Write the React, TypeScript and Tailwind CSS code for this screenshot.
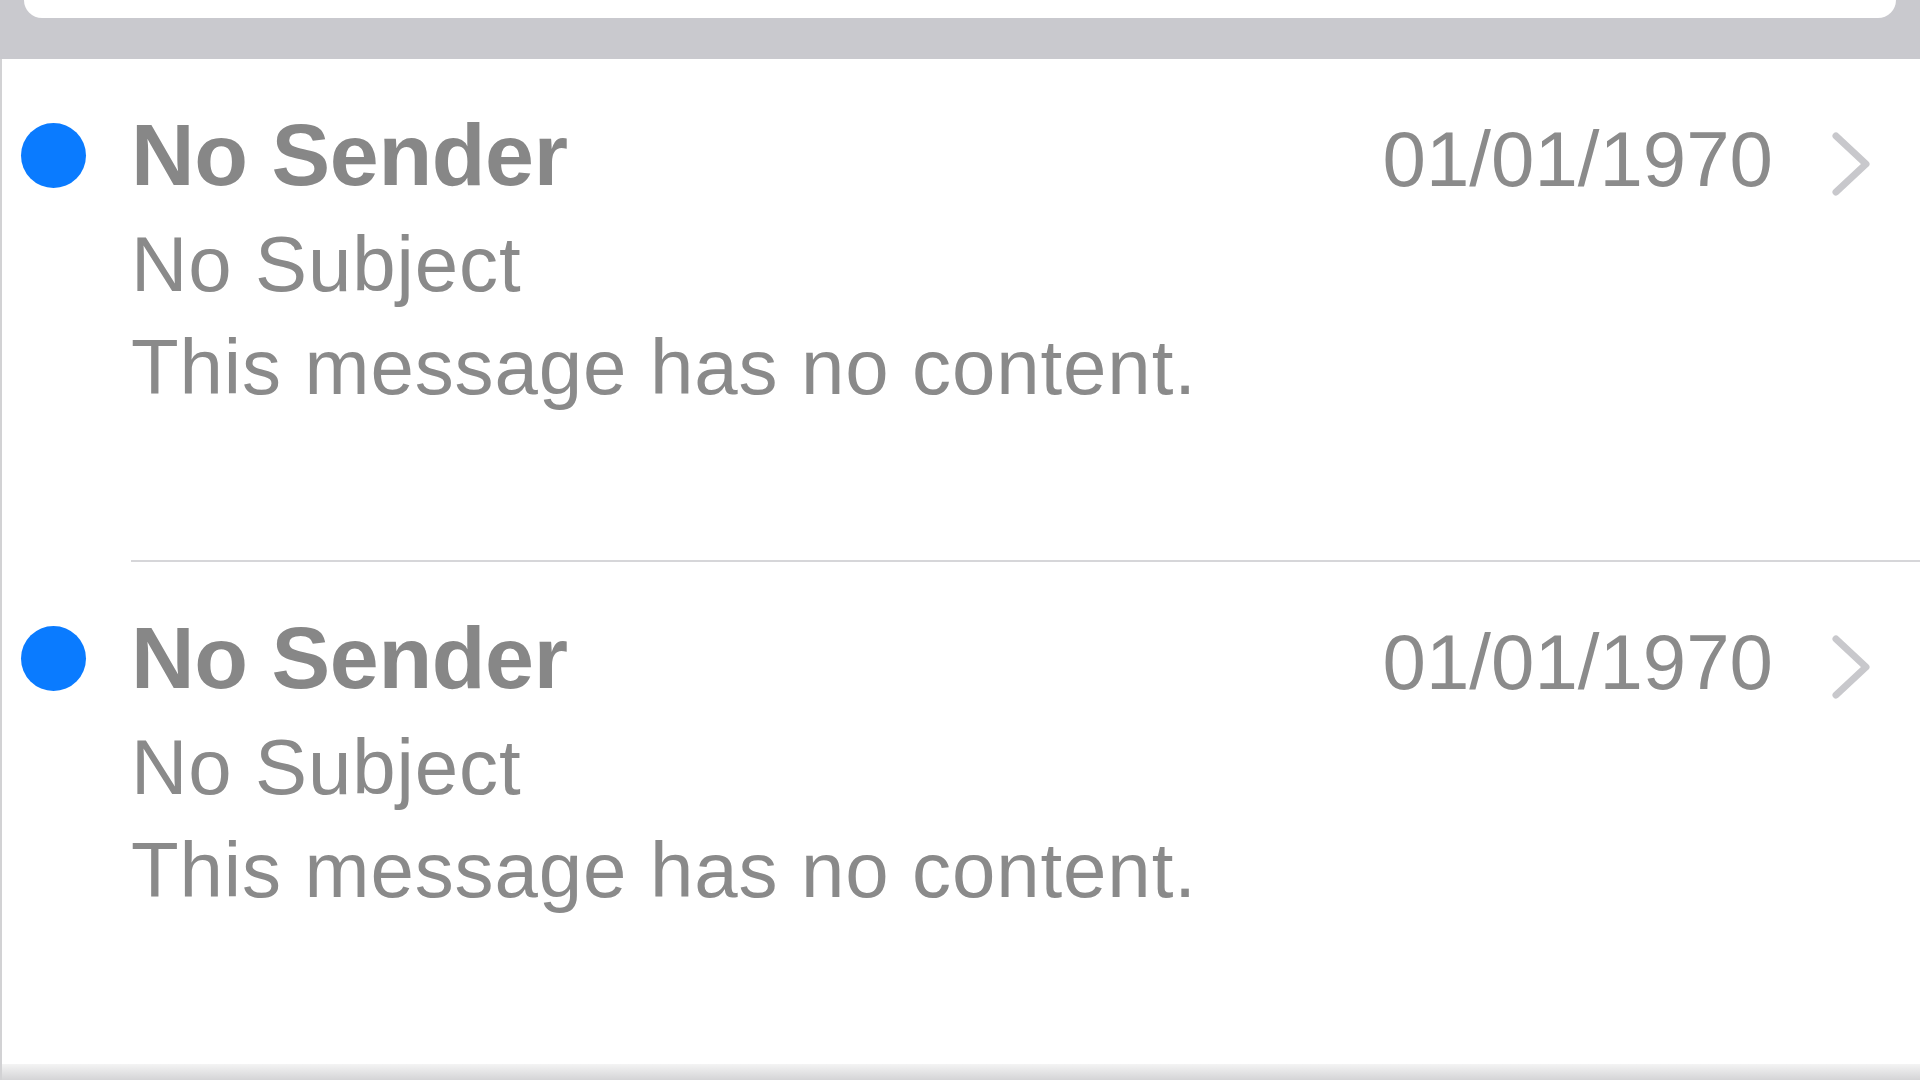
import React from 'react';

type Message = {
  id: number;
  sender: string;
  subject: string;
  preview: string;
  date: string;
  unread: boolean;
};

const messages: Message[] = [
  { id: 1, sender: 'No Sender', subject: 'No Subject', preview: 'This message has no content.', date: '01/01/1970', unread: true },
  { id: 2, sender: 'No Sender', subject: 'No Subject', preview: 'This message has no content.', date: '01/01/1970', unread: true },
];

const Chevron: React.FC = () => (
  <svg width="40" height="108" viewBox="0 0 40 108" className="shrink-0">
    <polyline
      points="5,35 35,63 5,91"
      fill="none"
      stroke="#c8c8cc"
      strokeWidth="7"
      strokeLinecap="round"
      strokeLinejoin="round"
    />
  </svg>
);

const MessageRow: React.FC<{ message: Message; last: boolean }> = ({ message, last }) => (
  <div className="flex pl-[19px] pt-[42px]">
    {/* unread marker */}
    <div className="flex h-[108px] w-[66px] shrink-0 items-center">
      {message.unread && <span className="block h-[65px] w-[65px] rounded-full bg-[#0a7bff]" />}
    </div>

    <div className={`ml-[44px] flex flex-1 flex-col pb-[141px] ${last ? '' : 'border-b-2 border-[#d6d6d9]'}`}>
      <div className="flex h-[108px] items-start">
        <span className="flex-1 text-[88px] leading-[108px] font-bold tracking-[-0.4px] text-[#878787]">
          {message.sender}
        </span>
        <span className="mt-[4px] text-[78px] leading-[108px] text-[#8b8b8b]">{message.date}</span>
        <div className="ml-[58px] mr-[49px]">
          <Chevron />
        </div>
      </div>
      <span className="mt-[4px] text-[78px] leading-[103px] tracking-[0.9px] text-[#8a8a8a]">{message.subject}</span>
      <span className="text-[78px] leading-[103px] tracking-[0.9px] text-[#8a8a8a]">{message.preview}</span>
    </div>
  </div>
);

const App: React.FC = () => {
  return (
    <div className="flex h-screen w-full flex-col overflow-hidden bg-white font-['Liberation_Sans',Arial,sans-serif]">
      {/* search bar strip */}
      <div className="h-[59px] shrink-0 bg-[#c9c9ce]">
        <div className="mx-[24px] h-[18px] rounded-b-[22px] bg-white" />
      </div>

      <div className="flex flex-1 flex-col border-l-2 border-[#d2d2d4]">
        {messages.map((m, i) => (
          <MessageRow key={m.id} message={m} last={i === messages.length - 1} />
        ))}
        <div className="flex-1" />
        <div className="h-[16px] shrink-0 bg-gradient-to-b from-[#f4f4f4] to-[#d4d4d6]" />
      </div>
    </div>
  );
};

export default App;
